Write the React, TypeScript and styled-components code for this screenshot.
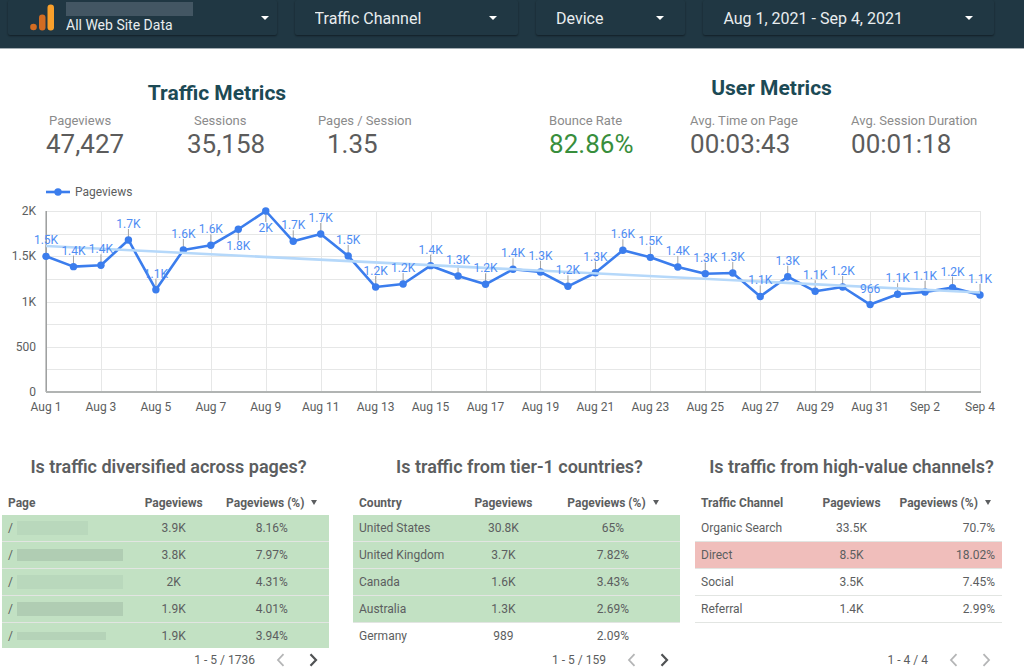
import React from "react";
import styled, { createGlobalStyle } from "styled-components";

const GlobalStyle = createGlobalStyle`
  *, *::before, *::after { box-sizing: border-box; }
  body {
    margin: 0;
    background: #ffffff;
    color: #5c5e60;
    font-family: Roboto, "Liberation Sans", sans-serif;
    font-size: 12px;
  }
  h2, h3 { margin: 0; }
`;

/* ---------- Header filters ---------- */

const FilterBar = styled.header`
  display: grid;
  grid-template-columns: 268fr 223fr 149fr 290fr;
  column-gap: 18px;
  height: 49px;
  padding: 0 30px 13px 8px;
  background: #203743;
  border-bottom: 1px solid #a3adb3;
`;

const FilterBox = styled.div`
  display: grid;
  grid-template-columns: minmax(0, 1fr);
  align-items: center;
  border-radius: 2px;
  box-shadow: 0 1px 2px rgba(0, 0, 0, 0.45);
  & > * { grid-area: 1 / 1; }
`;

const controlStyles = `
  width: 100%;
  height: 35px;
  margin: 0;
  border: 0;
  background: transparent;
  color: #e9edef;
  font-family: inherit;
  text-align: left;
  cursor: pointer;
`;

const FilterSelect = styled.select<{ $inset: number; $account?: boolean }>`
  ${controlStyles}
  appearance: none;
  font-size: ${(p) => (p.$account ? 14 : 16)}px;
  padding: ${(p) => (p.$account ? 14 : 2)}px 0 0 ${(p) => p.$inset}px;
  option { color: #203743; }
`;

const FilterButton = styled.button`
  ${controlStyles}
  font-size: 16px;
  padding: 2px 0 0 20px;
`;

const Caret = styled.span<{ $edge?: boolean }>`
  justify-self: end;
  margin-right: ${(p) => (p.$edge ? 8 : 21)}px;
  border: 4px solid transparent;
  border-top-color: #ffffff;
  border-bottom: 0;
  pointer-events: none;
`;

const AccountMark = styled.span`
  display: flex;
  align-self: start;
  gap: 12px;
  padding: 2px 0 0 22px;
  pointer-events: none;
`;

const AccountName = styled.span`
  width: 127px;
  height: 14px;
  background: #435663;
`;

/* ---------- Score cards ---------- */

const Metrics = styled.section`
  display: grid;
  grid-template-columns: 342fr 445fr;
  column-gap: 17%;
  align-items: end;
  padding: 27px 30px 0 46px;
`;

const MetricGroup = styled.div<{ $gap: number }>`
  display: grid;
  row-gap: ${(p) => p.$gap}px;
`;

const GroupTitle = styled.h2`
  color: #1c4a55;
  font-size: 21px;
  font-weight: 700;
  line-height: 24px;
  text-align: center;
`;

const MetricRow = styled.dl<{ $columns: string }>`
  display: grid;
  grid-template-columns: ${(p) => p.$columns};
  margin: 0;
  white-space: nowrap;
`;

const MetricLabel = styled.dt<{ $inset?: number }>`
  padding-left: ${(p) => p.$inset ?? 0}px;
  color: #8b8b8b;
  font-size: 13px;
  line-height: 16px;
`;

const MetricValue = styled.dd<{ $inset?: number; $good?: boolean }>`
  margin: 0;
  padding-left: ${(p) => p.$inset ?? 0}px;
  color: ${(p) => (p.$good ? "#388e3c" : "#5c5c5c")};
  font-size: 26px;
  line-height: 30px;
`;

type Metric = {
  label: string;
  value: string;
  labelInset?: number;
  valueInset?: number;
  good?: boolean;
};

const trafficMetrics: Metric[] = [
  { label: "Pageviews", value: "47,427", labelInset: 3 },
  { label: "Sessions", value: "35,158", labelInset: 7 },
  { label: "Pages / Session", value: "1.35", valueInset: 9 },
];

const userMetrics: Metric[] = [
  { label: "Bounce Rate", value: "82.86%", good: true },
  { label: "Avg. Time on Page", value: "00:03:43" },
  { label: "Avg. Session Duration", value: "00:01:18" },
];

function ScoreCards(props: { title: string; columns: string; gap: number; metrics: Metric[] }) {
  return (
    <MetricGroup $gap={props.gap}>
      <GroupTitle>{props.title}</GroupTitle>
      <MetricRow $columns={props.columns}>
        {props.metrics.map((m) => (
          <div key={m.label}>
            <MetricLabel $inset={m.labelInset}>{m.label}</MetricLabel>
            <MetricValue $inset={m.valueInset} $good={m.good}>{m.value}</MetricValue>
          </div>
        ))}
      </MetricRow>
    </MetricGroup>
  );
}

/* ---------- Pageviews chart ---------- */

const ChartSection = styled.section`
  padding-top: 25px;
`;

const Legend = styled.div`
  display: flex;
  align-items: center;
  gap: 5px;
  height: 16px;
  padding-left: 46px;
`;

const ChartSvg = styled.svg`
  display: block;
  width: 100%;
  height: auto;
  font-size: 12px;
  overflow: visible;
`;

const DAILY = [
  1499, 1385, 1400, 1680, 1130, 1569, 1621, 1798, 2000, 1665, 1746, 1503,
  1160, 1193, 1396, 1282, 1190, 1356, 1326, 1168, 1318, 1566, 1488, 1381,
  1307, 1315, 1056, 1274, 1113, 1160, 966, 1080, 1105, 1153, 1072,
];

const PLOT = { left: 46, right: 980, top: 11, bottom: 192 };
const xAt = (i: number) => PLOT.left + (i * (PLOT.right - PLOT.left)) / (DAILY.length - 1);
const yAt = (v: number) => PLOT.bottom - (v * (PLOT.bottom - PLOT.top)) / 2000;
const short = (v: number) =>
  v < 1000 ? String(v) : `${(v / 1000).toFixed(1).replace(".0", "")}K`;
const dayName = (i: number) => (i < 31 ? `Aug ${i + 1}` : `Sep ${i - 30}`);

function PageviewsChart() {
  const points = DAILY.map((v, i) => ({ i, v, x: xAt(i), y: yAt(v), below: v > 1750 }));
  return (
    <ChartSvg viewBox="0 0 1024 216" role="img" aria-label="Pageviews by day">
      <g stroke="#e6e7e7" strokeWidth="1">
        {[250, 500, 750, 1000, 1250, 1500, 1750, 2000].map((v) => (
          <line key={v} x1={PLOT.left} x2={PLOT.right} y1={Math.round(yAt(v)) + 0.5} y2={Math.round(yAt(v)) + 0.5} />
        ))}
        {points.filter((p) => p.i % 2 === 0).map((p) => (
          <line key={p.i} x1={Math.round(p.x) + 0.5} x2={Math.round(p.x) + 0.5} y1={PLOT.top} y2={PLOT.bottom} />
        ))}
      </g>
      <line x1="46.2" x2="46.2" y1={PLOT.top} y2={PLOT.bottom} stroke="#9b9d9d" strokeWidth="1.5" />
      <line x1="46" x2="981" y1={PLOT.bottom} y2={PLOT.bottom} stroke="#b1b4b3" strokeWidth="2" />
      <g stroke="#a3a3a3">
        {points.map((p) => (
          <line key={p.i} x1={p.x} x2={p.x} y1={p.y} y2={p.below ? p.y + 11 : p.y - 11} />
        ))}
      </g>
      <polyline
        points={points.map((p) => `${p.x},${p.y}`).join(" ")}
        fill="none"
        stroke="#3b7ded"
        strokeWidth="2.6"
        strokeLinejoin="round"
      />
      {points.map((p) => (
        <circle key={p.i} cx={p.x} cy={p.y} r="3.7" fill="#3b7ded" />
      ))}
      <line x1={PLOT.left} y1="46" x2={PLOT.right} y2="92.5" stroke="#b5d8fa" strokeWidth="2.6" />
      <g fill="#4f8df3" textAnchor="middle">
        {points.map((p) => (
          <text key={p.i} x={p.x} y={p.below ? p.y + 21 : p.y - 12}>{short(p.v)}</text>
        ))}
      </g>
      <g fill="#5c5e60">
        {[0, 500, 1000, 1500, 2000].map((v) => (
          <text key={v} x="36" y={yAt(v) + 4} textAnchor="end">{short(v)}</text>
        ))}
        {points.filter((p) => p.i % 2 === 0).map((p) => (
          <text key={p.i} x={p.x} y="211" textAnchor="middle">{dayName(p.i)}</text>
        ))}
      </g>
    </ChartSvg>
  );
}

/* ---------- Tables ---------- */

const Panels = styled.section`
  display: flex;
  padding: 39px 22px 0 2px;
`;

const Panel = styled.article<{ $grow: number; $after: number }>`
  flex: ${(p) => p.$grow} 1 0;
  min-width: 0;
  margin-right: ${(p) => p.$after}px;
`;

const PanelTitle = styled.h3`
  padding-left: 6px;
  font-size: 18px;
  font-weight: 600;
  line-height: 24px;
  text-align: center;
  white-space: nowrap;
`;

const TableView = styled.div`
  height: 157px;
  margin-top: 12px;
  overflow: hidden;
`;

const DataTable = styled.table`
  width: 100%;
  border-collapse: separate;
  border-spacing: 0;
  table-layout: fixed;
  white-space: nowrap;
`;

const HeadCell = styled.th<{ $share: number; $first?: boolean }>`
  width: ${(p) => p.$share}%;
  height: 24px;
  padding: 0 0 0 ${(p) => (p.$first ? 6 : 0)}px;
  font-size: 12px;
  font-weight: 700;
  text-align: ${(p) => (p.$first ? "left" : "center")};
`;

const SortArrow = styled.span`
  display: inline-block;
  margin-left: 7px;
  border: 3px solid transparent;
  border-top: 5px solid #5c5e60;
  border-bottom: 0;
  vertical-align: 2px;
`;

const Row = styled.tr<{ $tone?: "good" | "bad" }>`
  height: 27px;
  background: ${(p) => (p.$tone === "good" ? "#c2e1c3" : p.$tone === "bad" ? "#f0bebb" : "transparent")};
`;

const Cell = styled.td<{ $align: "left" | "center" | "right" }>`
  padding: 0 ${(p) => (p.$align === "right" ? 7 : 0)}px 0 ${(p) => (p.$align === "left" ? 6 : 0)}px;
  border-bottom: 1px solid #e2e5e2;
  text-align: ${(p) => p.$align};
`;

const HiddenPath = styled.span`
  display: flex;
  align-items: center;
  gap: 4px;
`;

const Redaction = styled.span<{ $width: number; $height: number; $color: string }>`
  width: ${(p) => p.$width}px;
  height: ${(p) => p.$height}px;
  background: ${(p) => p.$color};
`;

const Pager = styled.nav`
  display: flex;
  align-items: center;
  justify-content: flex-end;
  height: 21px;
  padding: 2px 4px 0 0;
`;

const PagerRange = styled.span`
  margin-right: 13px;
`;

const PagerButton = styled.button`
  display: grid;
  place-items: center;
  width: 24px;
  height: 19px;
  padding: 0;
  border: 0;
  background: transparent;
  color: #505254;
  & + & { margin-left: 9px; }
  &:disabled { color: #b4b5b6; }
`;

const redacted = (width: number, height: number, color: string) => (
  <HiddenPath>
    /<Redaction $width={width} $height={height} $color={color} />
  </HiddenPath>
);

type TableData = {
  title: string;
  heading: string;
  grow: number;
  after: number;
  shares: [number, number, number];
  percentAlign: "center" | "right";
  range: string;
  lastPage?: boolean;
  rows: { name: React.ReactNode; views: string; percent: string; tone?: "good" | "bad" }[];
};

const tables: TableData[] = [
  {
    title: "Is traffic diversified across pages?",
    heading: "Page",
    grow: 327,
    after: 24,
    shares: [40, 25, 35],
    percentAlign: "center",
    range: "1 - 5 / 1736",
    rows: [
      { name: redacted(71, 14, "#b9d8bc"), views: "3.9K", percent: "8.16%", tone: "good" },
      { name: redacted(106, 12, "#b0cdb3"), views: "3.8K", percent: "7.97%", tone: "good" },
      { name: redacted(106, 14, "#b9d8bc"), views: "2K", percent: "4.31%", tone: "good" },
      { name: redacted(106, 14, "#b0cdb3"), views: "1.9K", percent: "4.01%", tone: "good" },
      { name: redacted(89, 8, "#b5d3b8"), views: "1.9K", percent: "3.94%", tone: "good" },
    ],
  },
  {
    title: "Is traffic from tier-1 countries?",
    heading: "Country",
    grow: 327,
    after: 15,
    shares: [33, 26, 41],
    percentAlign: "center",
    range: "1 - 5 / 159",
    rows: [
      { name: "United States", views: "30.8K", percent: "65%", tone: "good" },
      { name: "United Kingdom", views: "3.7K", percent: "7.82%", tone: "good" },
      { name: "Canada", views: "1.6K", percent: "3.43%", tone: "good" },
      { name: "Australia", views: "1.3K", percent: "2.69%", tone: "good" },
      { name: "Germany", views: "989", percent: "2.09%" },
    ],
  },
  {
    title: "Is traffic from high-value channels?",
    heading: "Traffic Channel",
    grow: 307,
    after: 0,
    shares: [39, 24, 37],
    percentAlign: "right",
    range: "1 - 4 / 4",
    lastPage: true,
    rows: [
      { name: "Organic Search", views: "33.5K", percent: "70.7%" },
      { name: "Direct", views: "8.5K", percent: "18.02%", tone: "bad" },
      { name: "Social", views: "3.5K", percent: "7.45%" },
      { name: "Referral", views: "1.4K", percent: "2.99%" },
    ],
  },
];

function TablePanel({ data }: { data: TableData }) {
  return (
    <Panel $grow={data.grow} $after={data.after}>
      <PanelTitle>{data.title}</PanelTitle>
      <TableView>
        <DataTable>
          <thead>
            <tr>
              <HeadCell scope="col" $share={data.shares[0]} $first>{data.heading}</HeadCell>
              <HeadCell scope="col" $share={data.shares[1]}>Pageviews</HeadCell>
              <HeadCell scope="col" $share={data.shares[2]} aria-sort="descending">
                Pageviews (%)
                <SortArrow />
              </HeadCell>
            </tr>
          </thead>
          <tbody>
            {data.rows.map((r, i) => (
              <Row key={i} $tone={r.tone}>
                <Cell $align="left">{r.name}</Cell>
                <Cell $align="center">{r.views}</Cell>
                <Cell $align={data.percentAlign}>{r.percent}</Cell>
              </Row>
            ))}
          </tbody>
        </DataTable>
      </TableView>
      <Pager aria-label={`${data.title} pages`}>
        <PagerRange>{data.range}</PagerRange>
        <PagerButton type="button" aria-label="Previous page" disabled>
          <svg width="9" height="14" viewBox="0 0 9 14" fill="none" stroke="currentColor" strokeWidth="1.8">
            <path d="M7.5 1.2 2 7l5.5 5.8" />
          </svg>
        </PagerButton>
        <PagerButton type="button" aria-label="Next page" disabled={data.lastPage}>
          <svg width="9" height="14" viewBox="0 0 9 14" fill="none" stroke="currentColor" strokeWidth={data.lastPage ? 1.8 : 2.2}>
            <path d="M1.5 1.2 7 7l-5.5 5.8" />
          </svg>
        </PagerButton>
      </Pager>
    </Panel>
  );
}

export default function App() {
  return (
    <>
      <GlobalStyle />
      <FilterBar>
        <FilterBox>
          <FilterSelect $inset={58} $account aria-label="Data source">
            <option>All Web Site Data</option>
          </FilterSelect>
          <AccountMark>
            <svg width="24" height="30" viewBox="0 0 24 30" aria-hidden="true">
              <rect x="17.5" y="2.5" width="6.5" height="26" rx="3.25" fill="#f9a02b" />
              <rect x="9" y="12.5" width="6.5" height="16" rx="3.25" fill="#d26c22" />
              <circle cx="3.5" cy="25" r="3.3" fill="#d26c22" />
            </svg>
            <AccountName />
          </AccountMark>
          <Caret $edge />
        </FilterBox>
        <FilterBox>
          <FilterSelect $inset={20} aria-label="Traffic Channel">
            <option>Traffic Channel</option>
          </FilterSelect>
          <Caret />
        </FilterBox>
        <FilterBox>
          <FilterSelect $inset={20} aria-label="Device">
            <option>Device</option>
          </FilterSelect>
          <Caret />
        </FilterBox>
        <FilterBox>
          <FilterButton type="button" aria-haspopup="dialog">Aug 1, 2021 - Sep 4, 2021</FilterButton>
          <Caret />
        </FilterBox>
      </FilterBar>
      <main>
        <Metrics>
          <ScoreCards title="Traffic Metrics" columns="141fr 131fr minmax(0, 70fr)" gap={8} metrics={trafficMetrics} />
          <ScoreCards title="User Metrics" columns="141fr 161fr 143fr" gap={13} metrics={userMetrics} />
        </Metrics>
        <ChartSection>
          <Legend>
            <svg width="24" height="8" viewBox="0 0 24 8" aria-hidden="true">
              <path d="M0 4h24" stroke="#3b7ded" strokeWidth="2.6" />
              <circle cx="12" cy="4" r="3.7" fill="#3b7ded" />
            </svg>
            Pageviews
          </Legend>
          <PageviewsChart />
        </ChartSection>
        <Panels>
          {tables.map((t) => (
            <TablePanel key={t.title} data={t} />
          ))}
        </Panels>
      </main>
    </>
  );
}
